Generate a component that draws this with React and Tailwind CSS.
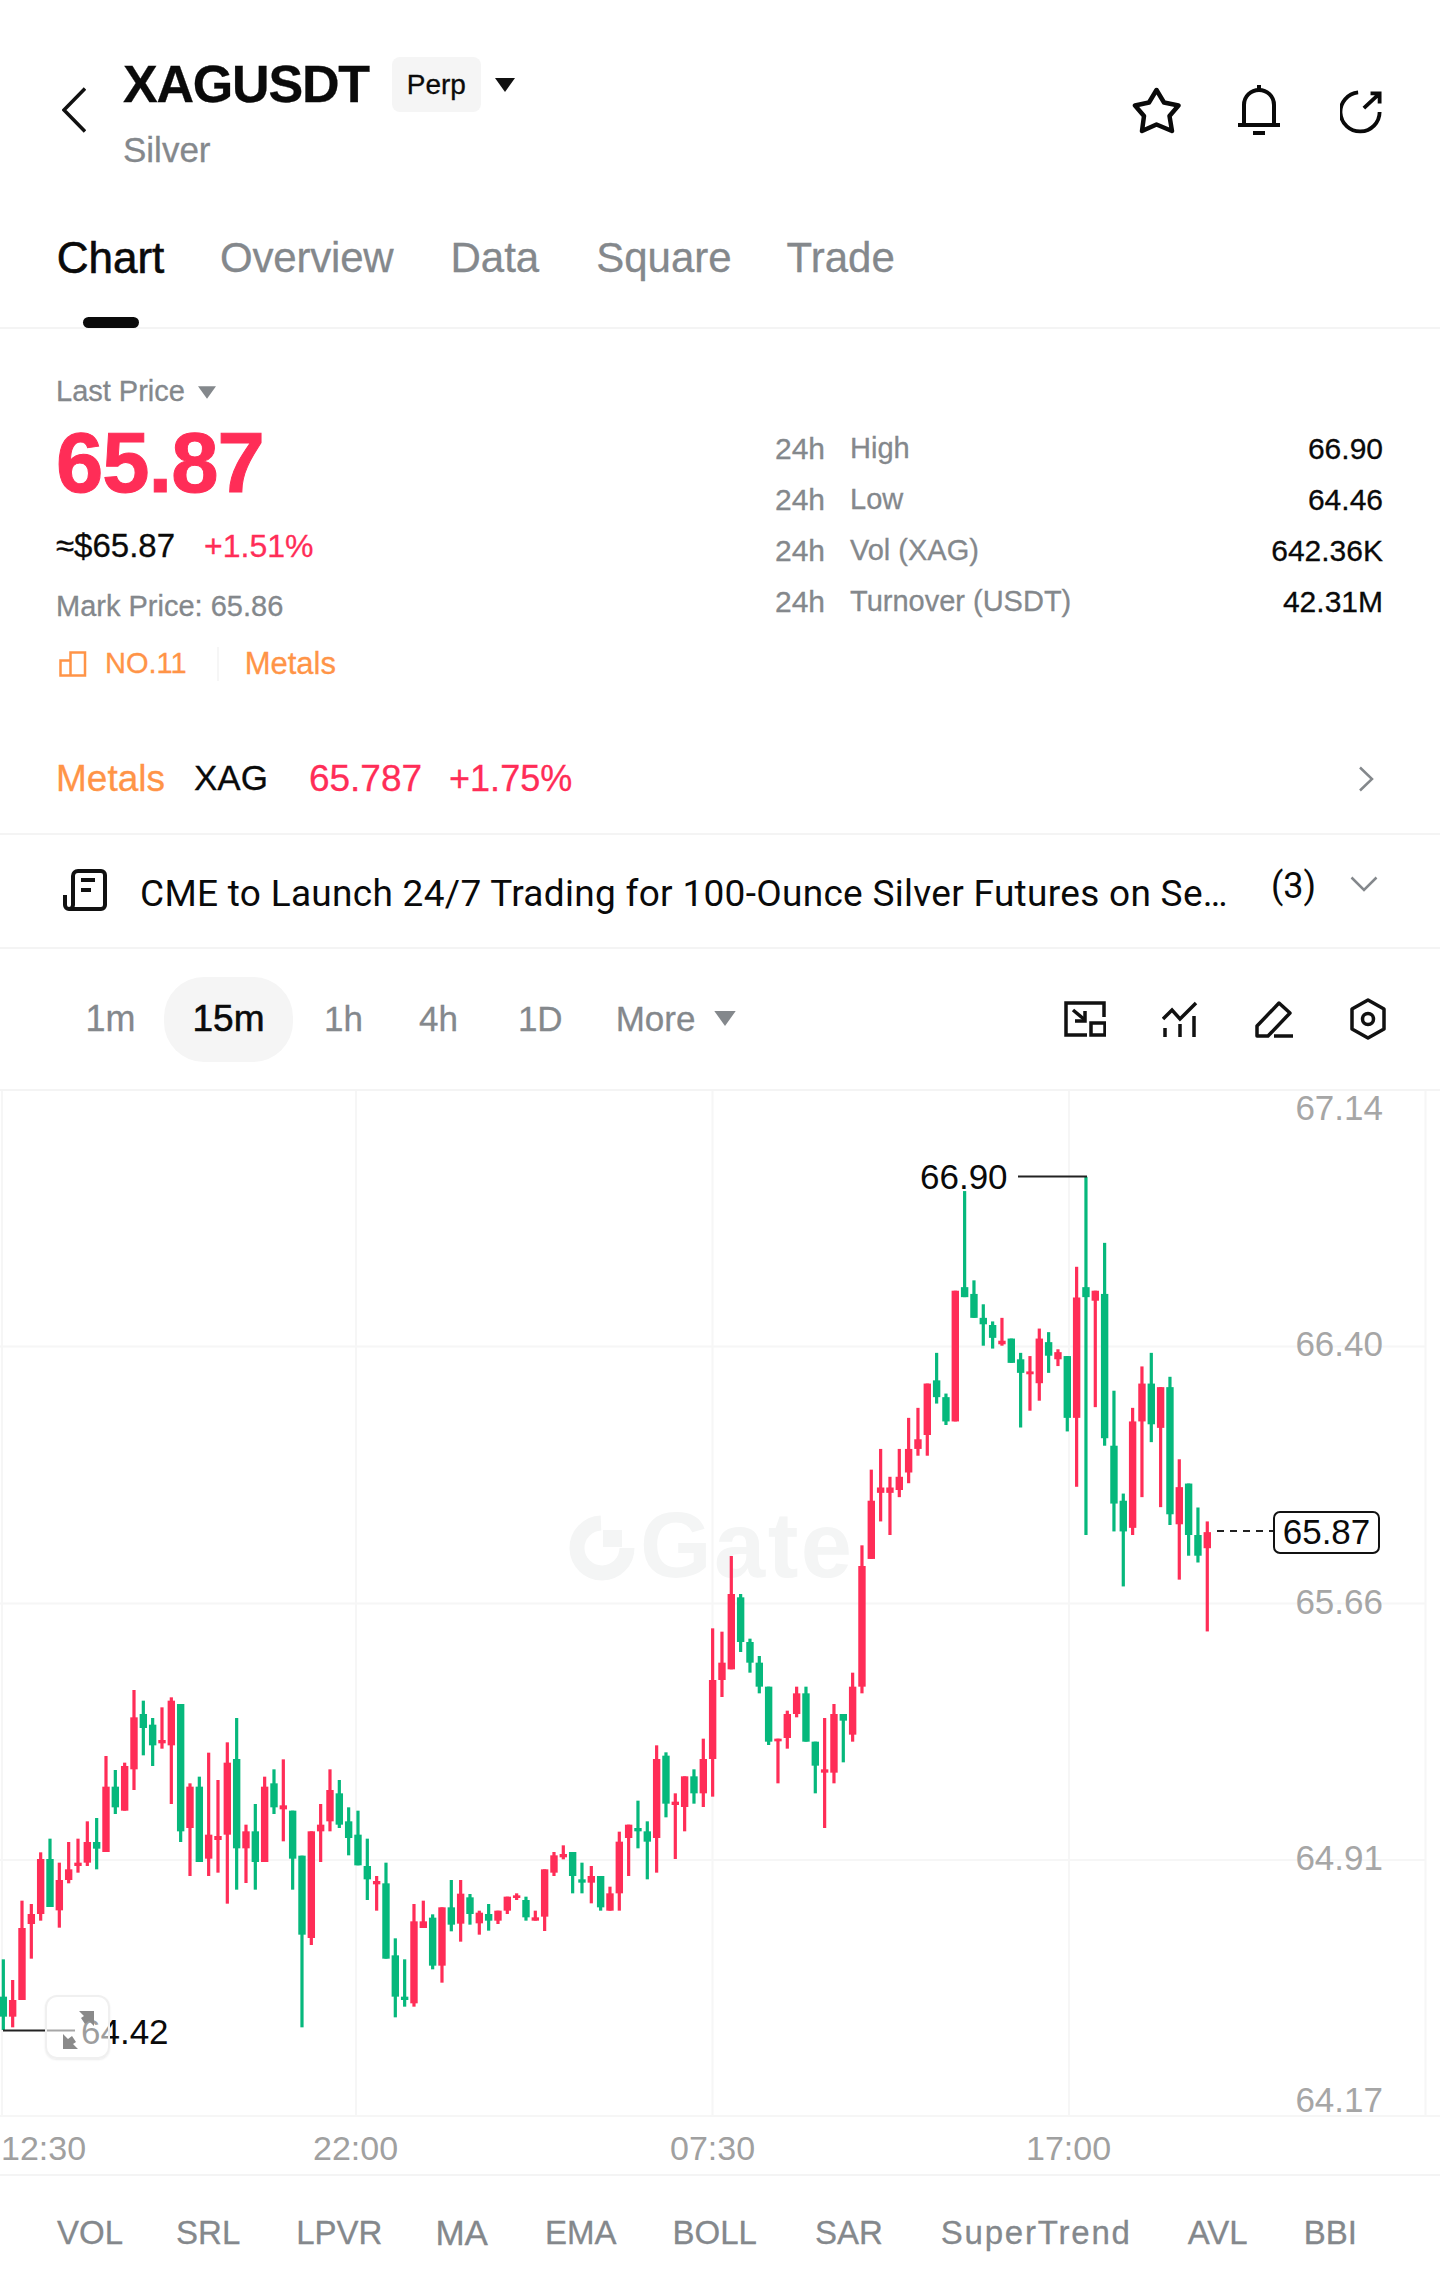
import React from "react";

const toY = (g, v) => g.o + v / g.s;
const groups = [
  { o: 1600, s: 3, start: 0, d: [
    "g1078,1190,1250,1290","r1140,1200,1250,1282","r902,984,1200,1200","r912,942,972,1076","r757,777,942,962","g716,777,921,921","r788,840,931,983","r726,808,840,850","r716,788,798,818","r664,726,788,798",
    "g654,726,746,808","r468,560,756,756","g510,560,622,642","r488,498,632,632","r270,352,508,570","g302,342,384,466","g354,374,436,498","r322,420,430,446","r292,302,436,612","g312,312,694,726",
    "r550,560,684,828","g530,560,786,786","r458,704,776,828","r540,708,720,818","r427,488,704,911","g354,477,745,869","r674,694,745,849","g612,694,786,869","r530,560,786,786","g508,550,622,642",
    "r478,616,628,724","g632,632,776,869","g767,767,1004,1282","r694,694,1014,1035","r612,674,694,786","r508,570,664,694","g540,580,674,684","g622,664,714,766","g632,704,796,796","g716,798,838,900",
    "r828,843,853,932","g788,850,1076,1076","g1015,1066,1190,1252","g1078,1190,1200,1220","r912,964,1210,1220","r902,964,984,984","g943,953,1097,1108","r922,922,1097,1148","g840,922,974,994","r840,881,971,1025","g882,892,942,974",
  ]},
  { o: 1500, s: 3, start: 51, d: [
    "r1232,1238,1270,1304","g1212,1242,1262,1292","r1232,1232,1262,1272","r1190,1190,1232,1242","r1180,1186,1194,1200","g1190,1200,1252,1262","r1232,1252,1262,1262","r1108,1108,1250,1293","r1056,1066,1118,1128","r1036,1062,1072,1078",
    "g1056,1056,1128,1180","g1088,1138,1148,1180","r1098,1128,1148,1210","g1128,1128,1222,1232","r1160,1180,1232,1232","r995,1025,1180,1232","r974,974,1014,1128","g902,984,994,1045","g964,994,1025,1138","r736,777,1014,1118",
    "g757,767,911,952","r880,905,915,1077","r829,829,921,994","g808,829,880,911","r716,777,880,921","r385,540,777,890","r395,488,540,591","r168,282,508,508","g282,292,426,456","g416,426,488,518",
    "g468,488,560,580","g560,560,725,735","r716,716,724,850","r632,642,714,746","r560,580,642,652","g560,580,725,725","g725,725,797,880","r654,808,818,984","r612,642,818,850","g642,642,662,787",
    "r518,560,704,725","r136,198,560,580",
  ]},
  { o: 1100, s: 2.8, start: 93, d: [
    "r1035,1122,1285,1285","r977,1085,1100,1180","r1055,1085,1100,1218","r977,1055,1092,1112","r890,977,1043,1073","r862,950,977,996","r794,794,938,996","g708,785,832,850","g822,832,900,910","r534,534,900,900",
    "g255,524,552,552","g505,543,610,610","g572,610,628,688","g620,630,666,696","r610,674,684,688","g668,668,736,736","g708,726,764,917","r717,760,768,870","r640,668,793,842","g650,678,716,764",
    "r698,706,726,745","g717,717,890,928","r467,553,890,1083","g215,524,552,1218","r534,534,562,860","g400,543,947,968","g814,968,1130,1208","g1102,1122,1208,1362","r862,900,1198,1218","r746,794,900,1112",
    "g708,794,908,958","r804,804,918,1140","g775,804,1160,1190","r1006,1084,1188,1343","g1074,1074,1218,1276","g1141,1218,1276,1295","r1180,1210,1255,1488",
  ]},
];

const candles = groups.flatMap((g) =>
  g.d.map((s, k) => {
    const [wt, bt, bb, wb] = s.slice(1).split(",").map(Number);
    return {
      i: g.start + k,
      c: s[0] === "r" ? "#ff2d57" : "#06b87c",
      wt: toY(g, wt),
      bt: toY(g, bt),
      bb: toY(g, bb),
      wb: toY(g, wb),
    };
  })
);

function Chart() {
  return (
    <svg viewBox="0 1091 1440 1085" className="absolute inset-0 w-[1440px] h-[1085px]">
      <g stroke="#f6f6f6" strokeWidth="2" fill="none">
        <path d="M0 1346.5H1426M0 1603.5H1426M0 1860H1426M0 2116H1440M2 1091V2116M356 1091V2116M712.5 1091V2116M1069 1091V2116M1425.5 1091V2116" />
      </g>
      <path d="M601 1523A25 25 0 1 0 627 1548" fill="none" stroke="#f4f5f5" strokeWidth="15" />
      <rect x="603" y="1530" width="19" height="17" fill="#f4f5f5" />
      {candles.map((c) => {
        const x = 3.33 + 9.333 * c.i;
        return (
          <g key={c.i} fill={c.c}>
            <rect x={x - 1.6} y={c.wt} width="3.2" height={c.wb - c.wt} />
            <rect x={x - 3.7} y={c.bt} width="7.4" height={Math.max(c.bb - c.bt, 2)} />
          </g>
        );
      })}
      <path d="M1018 1176.5H1087" stroke="#222" strokeWidth="2" fill="none" />
      <path d="M1217 1531H1273" stroke="#222" strokeWidth="2" strokeDasharray="7 6" fill="none" />
      <path d="M3 2030.5H75" stroke="#222" strokeWidth="2" fill="none" />
    </svg>
  );
}

const Caret = ({ className, fill }) => (
  <svg viewBox="0 0 20 14" className={className}>
    <path d="M0 0H20L10 14Z" fill={fill} />
  </svg>
);

const stats = [
  ["High", "66.90"],
  ["Low", "64.46"],
  ["Vol (XAG)", "642.36K"],
  ["Turnover (USDT)", "42.31M"],
];

const axis = [
  ["67.14", "top-[-3px]"],
  ["66.40", "top-[233px]"],
  ["65.66", "top-[491px]"],
  ["64.91", "top-[747px]"],
  ["64.17", "top-[989px]"],
];

export default function App() {
  return (
    <div className="w-[1440px] h-[2272px] bg-white overflow-hidden font-['Liberation_Sans',sans-serif] text-[#0a0a0a] [-webkit-text-stroke:0.3px_currentColor]">
      {/* header */}
      <header className="h-[210px] flex items-start pl-[62px] pr-[58px]">
        <svg viewBox="0 0 24 46" className="w-[24px] h-[46px] mt-[87px]" fill="none" stroke="#111" strokeWidth="3.5">
          <path d="M23 1.5L2 23L23 44.5" />
        </svg>
        <div className="ml-[37px] mt-[57px]">
          <div className="flex items-center h-[55px]">
            <span className="text-[52px] leading-[55px] font-bold tracking-[-1.2px]">XAGUSDT</span>
            <span className="ml-[23px] w-[89px] h-[55px] rounded-[8px] bg-[#f5f5f5] flex items-center justify-center text-[28px]">Perp</span>
            <Caret className="ml-[14px] w-[20px] h-[14px]" fill="#111" />
          </div>
          <div className="mt-[20px] text-[35px] leading-[36px] text-[#84888c]">Silver</div>
        </div>
        <div className="ml-auto mt-[85px] flex items-start">
          <svg viewBox="0 0 50 47" className="w-[50px] h-[47px] mt-[2px]" fill="none" stroke="#0a0a0a" strokeWidth="4.5" strokeLinejoin="round">
            <path d="M24.5 3L32 15.5L46.5 18.5L37.5 29L40 44L24.5 37.5L10 44L12 29L3 18.5L17 15.5Z" />
          </svg>
          <svg viewBox="0 0 42 51" className="w-[42px] h-[51px] ml-[56px]" fill="none" stroke="#0a0a0a" strokeWidth="4">
            <path d="M6 40V20C6 11 13 5 21 5C29 5 36 11 36 20V40" />
            <path d="M21 0V6M0 40H42" />
            <path d="M15 48H27" />
          </svg>
          <svg viewBox="0 0 44 45" className="w-[42px] h-[45px] ml-[60px] mt-[4px]" fill="none" stroke="#0a0a0a" strokeWidth="4">
            <path d="M19 2.5A20.5 20.5 0 1 0 41.5 23" />
            <path d="M25 19L41 4M32 3.5H41.5V14" />
          </svg>
        </div>
      </header>

      {/* tabs */}
      <nav className="h-[119px] border-b-2 border-[#f4f4f4] flex items-start pl-[57px] pt-[24px] text-[42px] leading-[48px] text-[#84888c]">
        <div className="w-[107px] flex flex-col items-center text-[#0a0a0a]">
          <span className="text-[44px] [-webkit-text-stroke:0.6px_currentColor]">Chart</span>
          <span className="mt-[35px] w-[56px] h-[11px] rounded-full bg-[#0a0a0a]" />
        </div>
        <span className="ml-[56px] tracking-[-0.2px]">Overview</span>
        <span className="ml-[57px]">Data</span>
        <span className="ml-[57px]">Square</span>
        <span className="ml-[55px]">Trade</span>
      </nav>

      {/* stats */}
      <section className="h-[391px] flex">
        <div className="w-[718px] pl-[56px] pt-[43px]">
          <div className="h-[40px] flex items-center text-[29px] text-[#84888c]">
            Last Price
            <Caret className="ml-[13px] w-[18px] h-[13px]" fill="#84888c" />
          </div>
          <div className="mt-[11px] h-[80px] leading-[80px] text-[85px] font-bold tracking-[-1px] text-[#ff2d57] [-webkit-text-stroke:1px_currentColor]">65.87</div>
          <div className="mt-[23px] h-[40px] flex items-center text-[33px]">
            <span>≈$65.87</span>
            <span className="ml-[29px] text-[32px] text-[#ff2d57]">+1.51%</span>
          </div>
          <div className="mt-[20px] h-[40px] leading-[40px] text-[29px] text-[#84888c]">Mark Price: 65.86</div>
          <div className="mt-[18px] h-[40px] flex items-center text-[29px] text-[#ff9447]">
            <svg viewBox="0 0 28 26" className="w-[28px] h-[26px] ml-[3px]" fill="none" stroke="#ff9447" strokeWidth="2.5">
              <path d="M1.5 24.5V9.5H11.5V24.5ZM11.5 9.5V1.5H26V24.5H11.5" />
            </svg>
            <span className="ml-[18px]">NO.11</span>
            <span className="ml-[30px] w-[2px] h-[34px] bg-[#f6f6f6]" />
            <span className="ml-[26px] text-[31px]">Metals</span>
          </div>
        </div>
        <div className="flex-1 pl-[57px] pr-[57px] pt-[94px]">
          {stats.map(([k, v]) => (
            <div key={k} className="h-[51px] flex items-center text-[30px]">
              <span className="w-[75px] text-[#84888c]">24h</span>
              <span className="text-[#84888c] text-[29px]">{k}</span>
              <span className="ml-auto">{v}</span>
            </div>
          ))}
        </div>
      </section>

      {/* sector row */}
      <section className="h-[115px] border-b-2 border-[#f4f4f4] flex items-center pl-[56px] pr-[66px] pt-[4px] text-[36px]">
        <span className="text-[37px] text-[#ff9447]">Metals</span>
        <span className="ml-[29px] text-[35px]">XAG</span>
        <span className="ml-[41px] text-[37px] text-[#ff2d57]">65.787</span>
        <span className="ml-[27px] text-[#ff2d57]">+1.75%</span>
        <svg viewBox="0 0 16 26" className="ml-auto w-[16px] h-[26px]" fill="none" stroke="#84888c" strokeWidth="2.5">
          <path d="M2 1.5L14 13L2 24.5" />
        </svg>
      </section>

      {/* news row */}
      <section className="h-[114px] border-b-2 border-[#f4f4f4] flex items-center pl-[63px] pb-[2px] [-webkit-text-stroke:0px]">
        <svg viewBox="0 0 44 42" className="w-[44px] h-[42px]" fill="none" stroke="#111" strokeWidth="4">
          <path d="M10 32V7a5 5 0 0 1 5-5h23a4 4 0 0 1 4 4v30a4 4 0 0 1-4 4H6" />
          <path d="M10 32v4a4 4 0 0 1-8 0V26" />
          <path d="M18 11H32M18 21H28" />
        </svg>
        <span className="ml-[33px] mt-[8px] w-[1090px] whitespace-nowrap font-['Roboto',sans-serif] text-[37px] tracking-[0.3px]">
          CME to Launch 24/7 Trading for 100-Ounce Silver Futures on Se…
        </span>
        <span className="ml-[41px] mb-[8px] font-['Roboto',sans-serif] text-[36px]">(3)</span>
        <svg viewBox="0 0 28 16" className="ml-[34px] mb-[12px] w-[28px] h-[16px]" fill="none" stroke="#84888c" strokeWidth="2.5">
          <path d="M1.5 1.5L14 14L26.5 1.5" />
        </svg>
      </section>

      {/* intervals */}
      <section className="h-[142px] border-b-2 border-[#f4f4f4] flex items-center pl-[57px] pr-[54px] text-[35px] text-[#84888c]">
        <span className="w-[107px] h-[85px] flex items-center justify-center text-[36px]">1m</span>
        <span className="w-[129px] h-[85px] rounded-[40px] bg-[#f5f5f5] text-[37px] text-[#0a0a0a] flex items-center justify-center [-webkit-text-stroke:0.6px_currentColor]">15m</span>
        <span className="ml-[31px]">1h</span>
        <span className="ml-[56px]">4h</span>
        <span className="ml-[60px]">1D</span>
        <span className="ml-[53px]">More</span>
        <Caret className="ml-[19px] w-[22px] h-[15px] mb-[2px]" fill="#84888c" />
        <div className="ml-auto flex items-center">
          <svg viewBox="0 0 42 36" className="w-[42px] h-[36px]" fill="none" stroke="#111" strokeWidth="3.5">
            <path d="M23 34H2V2H40V16" />
            <rect x="27" y="22" width="14" height="12" />
            <path d="M9 9L21 19" />
            <path d="M21 10V20H11" />
          </svg>
          <svg viewBox="0 0 36 36" className="ml-[56px] w-[36px] h-[36px]" fill="none" stroke="#111" strokeWidth="3.5">
            <path d="M1 18L10 9L18 18L34 2" />
            <path d="M3 27V36M18 23V36M32 15V36" />
          </svg>
          <svg viewBox="0 0 38 38" className="ml-[57px] w-[38px] h-[38px]" fill="none" stroke="#111" strokeWidth="3.5" strokeLinejoin="round">
            <path d="M2 36V26L24 3L35 13L13 36Z" />
            <path d="M19 36H38" />
          </svg>
          <svg viewBox="0 0 36 42" className="ml-[57px] w-[36px] h-[42px]" fill="none" stroke="#111" strokeWidth="3.5" strokeLinejoin="round">
            <path d="M18 2L34 11V31L18 40L2 31V11Z" />
            <circle cx="18" cy="21" r="5.5" />
          </svg>
        </div>
      </section>

      {/* chart */}
      <section className="relative h-[1085px] border-b-2 border-[#f4f4f4] [-webkit-text-stroke:0px]">
        <span className="absolute left-[640px] top-[406px] text-[92px] leading-[96px] font-bold tracking-[2.5px] text-[#f4f5f5]">Gate</span>
        <Chart />
        {axis.map(([t, c]) => (
          <span key={t} className={`absolute right-[57px] text-[35px] leading-[40px] text-[#a6a6a6] ${c}`}>{t}</span>
        ))}
        <span className="absolute left-[920px] top-[66px] text-[35px] leading-[40px]">66.90</span>
        <span className="absolute left-[1273px] top-[420px] w-[107px] h-[43px] rounded-[7px] border-2 border-[#111] bg-white flex items-center justify-center text-[35px]">65.87</span>
        <span className="absolute left-[81px] top-[921px] text-[35px] leading-[40px]">64.42</span>
        <div className="absolute left-[45px] top-[904px] w-[65px] h-[64px] rounded-[12px] border-2 border-[#f0f0f0] bg-white/60 shadow-[0_1px_2px_rgba(0,0,0,0.08)]">
          <svg viewBox="0 0 65 64" className="w-[65px] h-[64px]" fill="#8a8a8a">
            <path d="M32 14H47V29L42 24L38 27L34 21L37 19Z" />
            <path d="M16 52V37L21 42L25 39L29 45L26 47L31 52Z" />
          </svg>
        </div>
        <span className="absolute left-[1px] top-[1037px] text-[34px] leading-[40px] text-[#a0a0a0]">12:30</span>
        <span className="absolute left-[313px] top-[1037px] text-[34px] leading-[40px] text-[#a0a0a0]">22:00</span>
        <span className="absolute left-[670px] top-[1037px] text-[34px] leading-[40px] text-[#a0a0a0]">07:30</span>
        <span className="absolute left-[1026px] top-[1037px] text-[34px] leading-[40px] text-[#a0a0a0]">17:00</span>
      </section>

      {/* indicators */}
      <footer className="h-[94px] flex items-center gap-[56px] pl-[57px] pt-[20px] text-[33px] text-[#84888c] whitespace-nowrap">
        <span>VOL</span>
        <span className="-ml-[3px]">SRL</span>
        <span>LPVR</span>
        <span className="-ml-[3px] text-[35px]">MA</span>
        <span className="ml-[1px]">EMA</span>
        <span>BOLL</span>
        <span className="ml-[2px]">SAR</span>
        <span className="ml-[2px] tracking-[1.8px]">SuperTrend</span>
        <span>AVL</span>
        <span>BBI</span>
      </footer>
    </div>
  );
}
